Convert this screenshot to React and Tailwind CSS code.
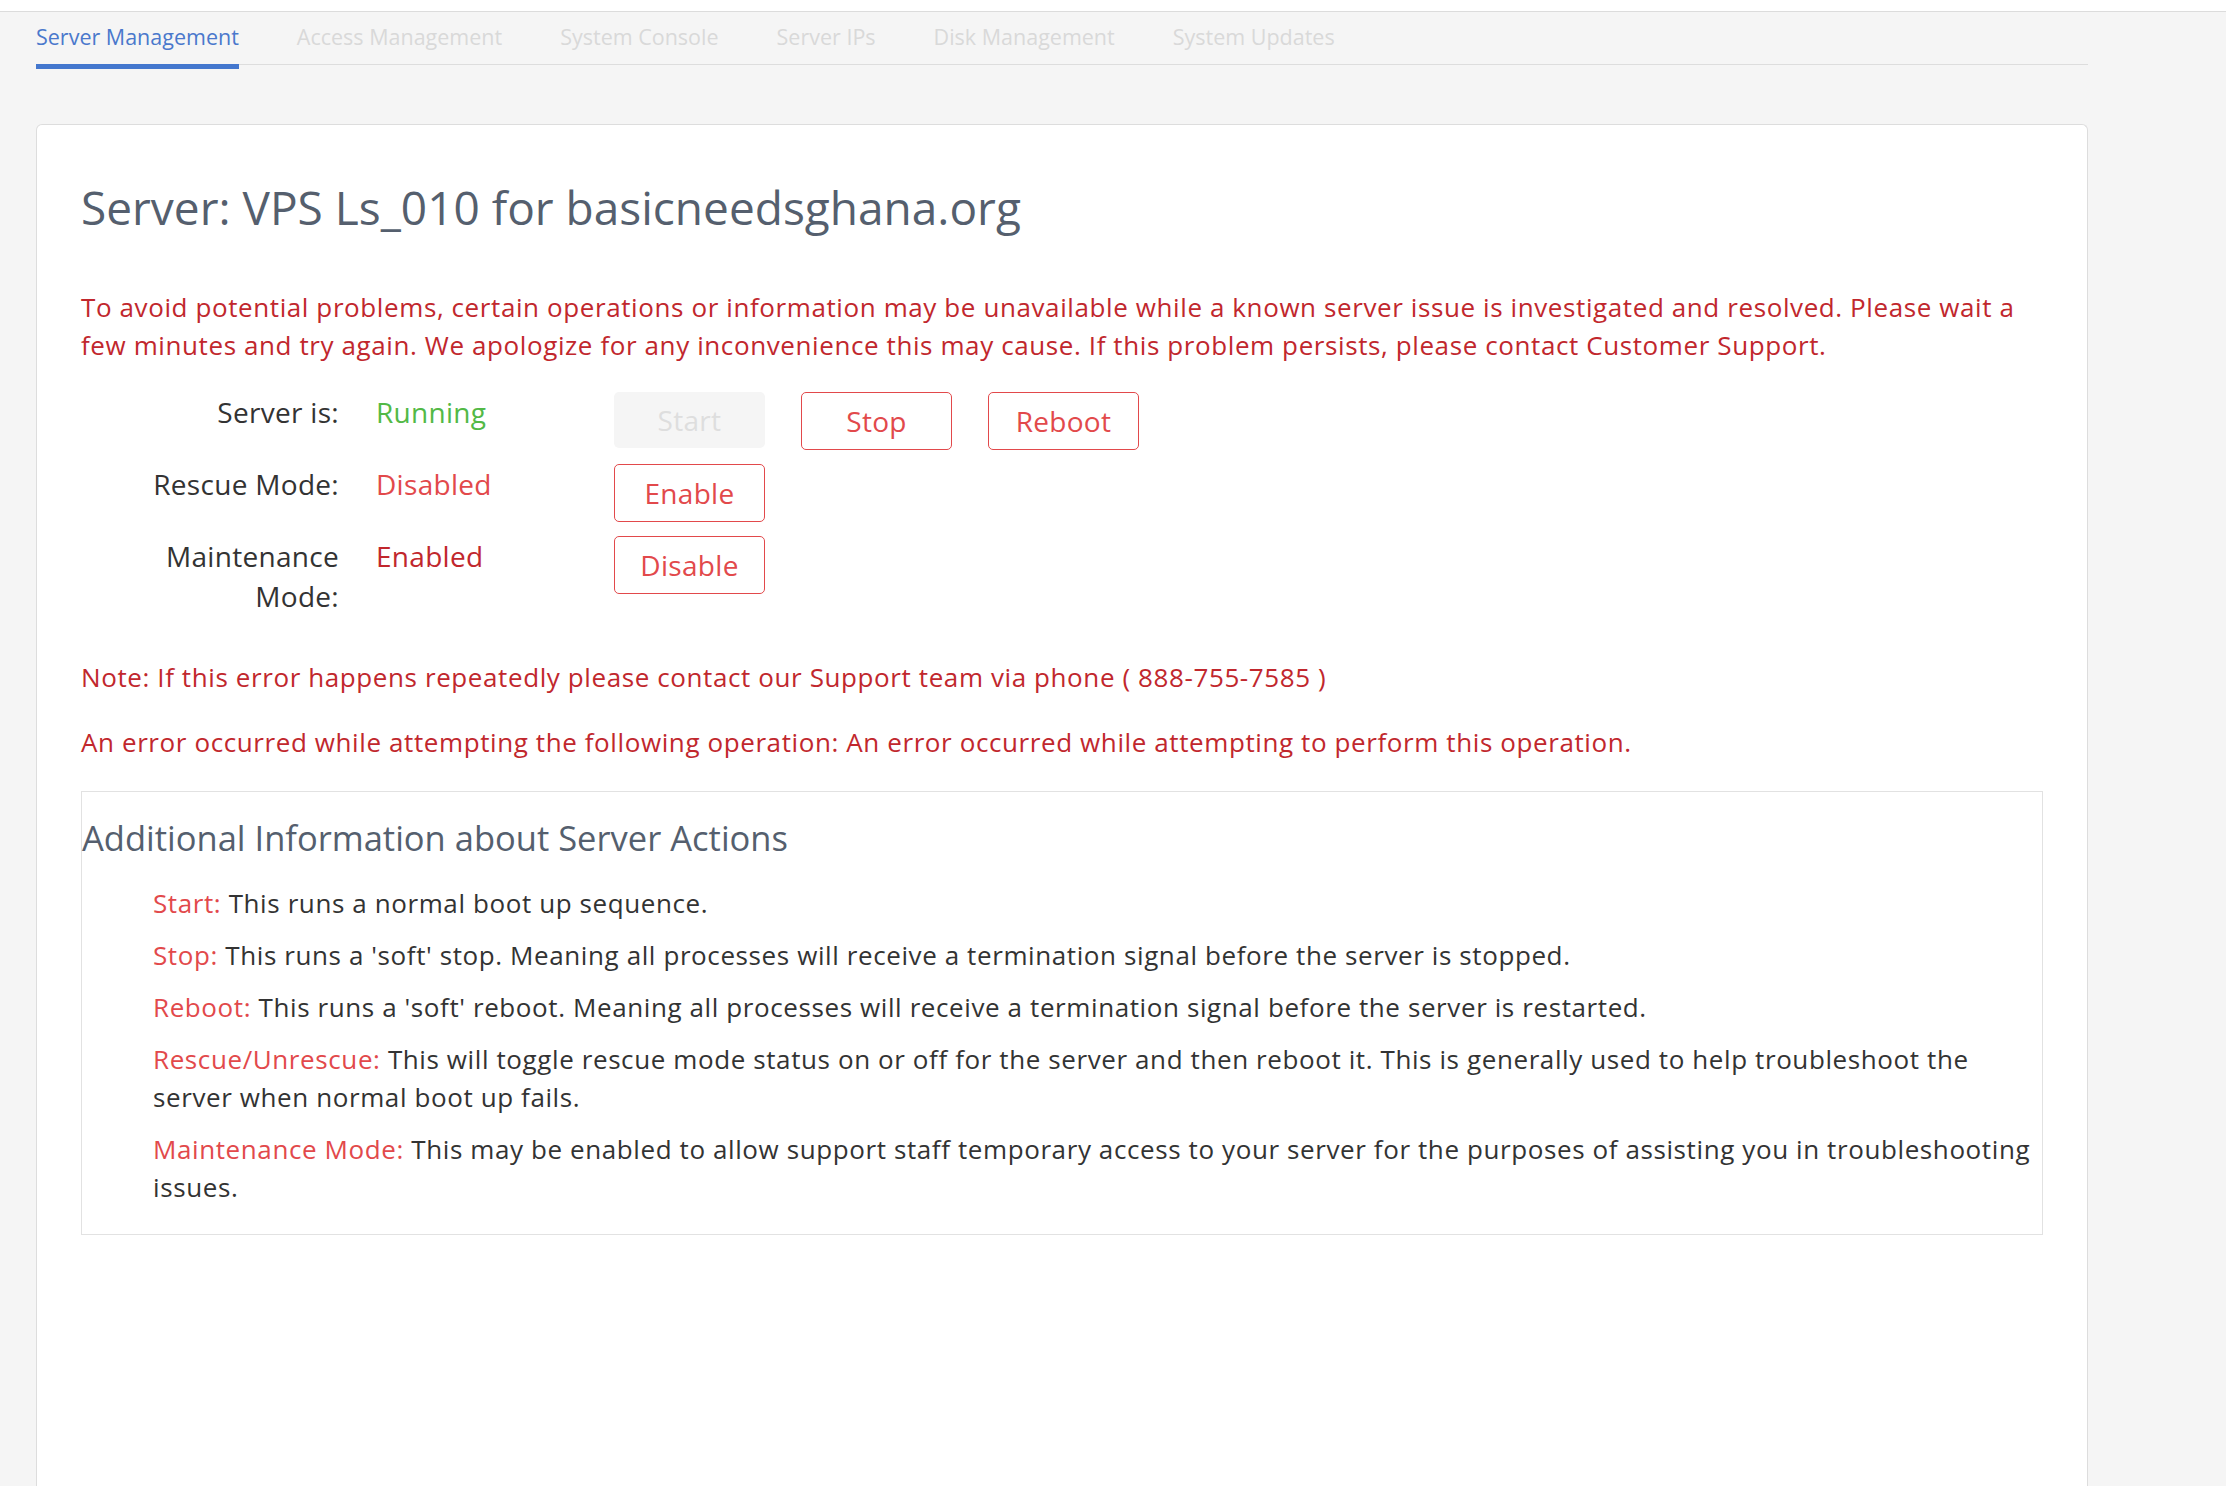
import React from "react";

const tabs = [
  "Server Management",
  "Access Management",
  "System Console",
  "Server IPs",
  "Disk Management",
  "System Updates",
];

function Btn({ children, disabled }) {
  if (disabled) {
    return (
      <div className="w-[151px] h-[56px] flex items-center justify-center rounded-[5px] bg-[#f5f5f5] text-[#dedede] text-[28px] tracking-[0.3px]">
        {children}
      </div>
    );
  }
  return (
    <div className="w-[151px] h-[58px] flex items-center justify-center rounded-[5px] border border-[#e2494b] bg-white text-[#e2494b] text-[28px] tracking-[0.3px]">
      {children}
    </div>
  );
}

function Row({ label, status, statusClass, children }) {
  return (
    <div className="flex items-start">
      <div className="w-[258px] text-right text-[28px] leading-[40px] tracking-[0.3px] text-[#333333]">{label}</div>
      <div className={"ml-[37px] w-[238px] text-[28px] leading-[40px] tracking-[0.3px] " + statusClass}>{status}</div>
      <div className="flex gap-[36px]">{children}</div>
    </div>
  );
}

function Item({ term, children }) {
  return (
    <div className="text-[26px] leading-[38px] tracking-[0.6px] text-[#333333]">
      <span className="text-[#e2494b]">{term}</span> {children}
    </div>
  );
}

export default function App() {
  return (
    <div className="min-h-screen bg-[#f5f5f5] font-['Open_Sans',sans-serif] overflow-hidden">
      <div className="h-[12px] bg-white border-b border-[#dcdcdc]" />
      <div className="ml-[36px] w-[2052px]">
        <div className="h-[53px] pt-[10px] flex items-stretch gap-[58px] border-b border-[#dddddd]">
          {tabs.map((t, i) => (
            <div
              key={t}
              className={
                "relative text-[21.5px] leading-[30px] " +
                (i === 0 ? "text-[#4a78cc]" : "text-[#d9d9d9]")
              }
            >
              {t}
              {i === 0 && <div className="absolute left-0 right-0 top-full h-[5px] bg-[#4477ce]" />}
            </div>
          ))}
        </div>

        <div className="mt-[59px] h-[1400px] bg-white border border-b-0 border-[#dddddd] rounded-t-[6px] px-[44px] pt-[54px]">
          <h1 className="text-[46px] leading-[56px] text-[#555f6e]">
            Server: VPS Ls_010 for basicneedsghana.org
          </h1>
          <p className="mt-[53px] text-[26px] leading-[38px] tracking-[0.6px] text-[#c1272d]">
            To avoid potential problems, certain operations or information may be unavailable while a known server issue is investigated and resolved. Please wait a few minutes and try again. We apologize for any inconvenience this may cause. If this problem persists, please contact Customer Support.
          </p>

          <div className="mt-[28px] flex flex-col gap-[14px]">
            <Row label="Server is:" status="Running" statusClass="text-[#52b946]">
              <Btn disabled>Start</Btn>
              <Btn>Stop</Btn>
              <Btn>Reboot</Btn>
            </Row>
            <Row label="Rescue Mode:" status="Disabled" statusClass="text-[#e2494b]">
              <Btn>Enable</Btn>
            </Row>
            <Row label="Maintenance Mode:" status="Enabled" statusClass="text-[#c1272d]">
              <Btn>Disable</Btn>
            </Row>
          </div>

          <p className="mt-[42px] text-[26px] leading-[38px] tracking-[0.6px] text-[#c1272d]">
            Note: If this error happens repeatedly please contact our Support team via phone ( 888-755-7585 )
          </p>
          <p className="mt-[27px] text-[26px] leading-[38px] tracking-[0.6px] text-[#c1272d]">
            An error occurred while attempting the following operation: An error occurred while attempting to perform this operation.
          </p>

          <div className="mt-[30px] border border-[#e2e2e2] pt-[25px] pb-[28px]">
            <h2 className="text-[34.5px] leading-[42px] text-[#555f6e]">
              Additional Information about Server Actions
            </h2>
            <div className="mt-[25px] pl-[71px] flex flex-col gap-[14px]">
              <Item term="Start:">This runs a normal boot up sequence.</Item>
              <Item term="Stop:">
                This runs a 'soft' stop. Meaning all processes will receive a termination signal before the server is stopped.
              </Item>
              <Item term="Reboot:">
                This runs a 'soft' reboot. Meaning all processes will receive a termination signal before the server is restarted.
              </Item>
              <Item term="Rescue/Unrescue:">
                This will toggle rescue mode status on or off for the server and then reboot it. This is generally used to help troubleshoot the server when normal boot up fails.
              </Item>
              <Item term="Maintenance Mode:">
                This may be enabled to allow support staff temporary access to your server for the purposes of assisting you in troubleshooting issues.
              </Item>
            </div>
          </div>
        </div>
      </div>
    </div>
  );
}
